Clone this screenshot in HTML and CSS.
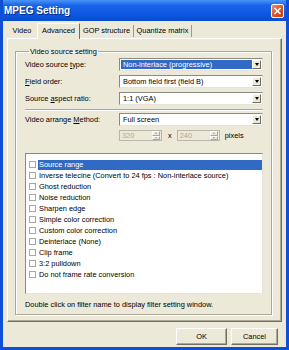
FILE: index.html
```html
<!DOCTYPE html>
<html lang="en">
<head>
    <meta charset="UTF-8">
    <title>MPEG Setting</title>
    <link rel="stylesheet" href="styles.css">
</head>
<body>
    <div class="window">
        <div class="titlebar">
            <span class="title">MPEG Setting</span>
            <span class="close">
                <svg width="13" height="14" viewBox="0 0 13 14"><path d="M3.5 4 L9.5 10 M9.5 4 L3.5 10" stroke="#fff" stroke-width="1.6"/></svg>
            </span>
        </div>
        <div class="content">
            <div class="tabs">
                <span class="tab tab-first">Video</span>
                <span class="tab active">Advanced</span>
                <span class="tab">GOP structure</span>
                <span class="tab">Quantize matrix</span>
            </div>
            <div class="panel">
                <fieldset class="group">
                    <legend>Video source setting</legend>
                    <div class="row">
                        <label>Video source <u>t</u>ype:</label>
                        <div class="combo"><span class="value selected">Non-interlace (progressive)</span><span class="drop"></span></div>
                    </div>
                    <div class="row">
                        <label><u>F</u>ield order:</label>
                        <div class="combo"><span class="value">Bottom field first (field B)</span><span class="drop"></span></div>
                    </div>
                    <div class="row">
                        <label>Source <u>a</u>spect ratio:</label>
                        <div class="combo"><span class="value">1:1 (VGA)</span><span class="drop"></span></div>
                    </div>
                    <div class="separator"></div>
                    <div class="row">
                        <label>Video arrange <u>M</u>ethod:</label>
                        <div class="combo"><span class="value">Full screen</span><span class="drop"></span></div>
                    </div>
                    <div class="row size-row">
                        <span></span>
                        <div class="size">
                            <div class="spin"><span class="value">320</span><span class="spin-btn"><i class="up"></i><i class="down"></i></span></div>
                            <span class="times">x</span>
                            <div class="spin"><span class="value">240</span><span class="spin-btn"><i class="up"></i><i class="down"></i></span></div>
                            <span class="unit">pixels</span>
                        </div>
                    </div>
                    <ul class="filters">
                        <li class="selected"><span class="check"></span><span class="name">Source range</span></li>
                        <li><span class="check"></span><span class="name">Inverse telecine (Convert to 24 fps : Non-interlace source)</span></li>
                        <li><span class="check"></span><span class="name">Ghost reduction</span></li>
                        <li><span class="check"></span><span class="name">Noise reduction</span></li>
                        <li><span class="check"></span><span class="name">Sharpen edge</span></li>
                        <li><span class="check"></span><span class="name">Simple color correction</span></li>
                        <li><span class="check"></span><span class="name">Custom color correction</span></li>
                        <li><span class="check"></span><span class="name">Deinterlace (None)</span></li>
                        <li><span class="check"></span><span class="name">Clip frame</span></li>
                        <li><span class="check"></span><span class="name">3:2 pulldown</span></li>
                        <li><span class="check"></span><span class="name">Do not frame rate conversion</span></li>
                    </ul>
                    <p class="hint">Double click on filter name to display filter setting window.</p>
                </fieldset>
            </div>
            <div class="buttons">
                <span class="button ok">OK</span>
                <span class="button cancel">Cancel</span>
            </div>
        </div>
    </div>
</body>
</html>
```

FILE: styles.css
```css
body {
    margin: 0;
    font-family: "Liberation Sans", Arial, sans-serif;
    font-size: 7.4px;
    color: #000;
    background: #ECE9D8;
}
.window {
    width: 289px;
    height: 350px;
    box-sizing: border-box;
    display: flex;
    flex-direction: column;
    background: #ECE9D8;
    border: 3px solid #0F4FD8;
    border-top: 0;
    overflow: hidden;
}
.titlebar {
    height: 21px;
    margin: 0 -3px;
    padding: 0 3px 0 4px;
    display: flex;
    align-items: center;
    justify-content: space-between;
    background: linear-gradient(#4A95FA, #1A64E8 25%, #0A56E0 75%, #0A4CC8);
    color: #fff;
}
.title {
    font-weight: bold;
    font-size: 10px;
    text-shadow: 1px 1px 0 #0A2A80;
}
.close {
    width: 13px;
    height: 14px;
    margin-right: 2px;
    border: 1px solid #fff;
    border-radius: 2px;
    background: linear-gradient(135deg, #F08A6A, #D8501E 60%, #C4400C);
    box-sizing: border-box;
    display: flex;
}
.close svg {
    margin: -1px;
}
.content {
    flex: 1;
    display: flex;
    flex-direction: column;
    padding: 0 4px;
}
.tabs {
    height: 17px;
    display: flex;
    align-items: flex-end;
}
.tab {
    flex-shrink: 0;
    height: 12px;
    margin-bottom: 1px;
    line-height: 12px;
    padding: 0 2px;
    border-right: 1px solid #9D9A8C;
    box-sizing: border-box;
    white-space: nowrap;
    text-align: center;
}
.tab-first {
    width: 30px;
    border-right: 0;
}
.tab.active {
    height: 16px;
    line-height: 13px;
    width: 43px;
    border: 1px solid #fff;
    border-right: 1px solid #716F64;
    border-bottom: 0;
    margin-bottom: -1px;
    background: #ECE9D8;
    position: relative;
    z-index: 1;
}
.tab:nth-child(3) {
    width: 54px;
}
.tab:nth-child(4) {
    width: 58px;
}
.panel {
    height: 284px;
    box-sizing: border-box;
    border: 1px solid #fff;
    border-right-color: #716F64;
    border-bottom-color: #716F64;
    box-shadow: inset -1px -1px 0 #ACA899;
    padding: 8px 9px 0 7px;
}
.group {
    margin: 0;
    height: 268px;
    box-sizing: border-box;
    border: 1px solid #ACA899;
    box-shadow: inset 1px 1px 0 #fff, 1px 1px 0 #fff;
    padding: 2px 8px 0 9px;
}
.group legend {
    padding: 0 1px;
    margin-left: 4px;
    line-height: 9px;
}
.row {
    display: grid;
    grid-template-columns: 94px 1fr;
    align-items: center;
    margin-bottom: 4px;
}
.row label {
    white-space: nowrap;
}
.combo {
    height: 13px;
    box-sizing: border-box;
    border: 1px solid #8C8A80;
    border-right-color: #E6E4DA;
    border-bottom-color: #E6E4DA;
    background: #fff;
    display: flex;
    padding: 1px;
}
.combo .value {
    flex: 1;
    line-height: 9px;
    padding-left: 2px;
    white-space: nowrap;
}
.combo .value.selected {
    background: #316AC5;
    color: #fff;
}
.drop {
    width: 9px;
    box-sizing: border-box;
    border: 1px solid #fff;
    border-right-color: #716F64;
    border-bottom-color: #716F64;
    background: #ECE9D8;
    display: flex;
    align-items: center;
    justify-content: center;
}
.drop::after {
    content: "";
    border: 2px solid transparent;
    border-top: 3px solid #000;
    margin-top: 2px;
}
.separator {
    height: 0;
    border-top: 1px solid #ACA899;
    border-bottom: 1px solid #fff;
    margin: 3px 0 2px;
}
.size-row {
    margin-bottom: 0;
}
.size {
    display: flex;
    align-items: center;
}
.spin {
    width: 43px;
    height: 11px;
    box-sizing: border-box;
    border: 1px solid #B8B6AA;
    background: #ECE9D8;
    display: flex;
    padding: 0 1px;
}
.spin .value {
    flex: 1;
    color: #ACA899;
    line-height: 9px;
    padding-left: 1px;
}
.spin-btn {
    width: 8px;
    display: flex;
    flex-direction: column;
}
.spin-btn i {
    flex: 1;
    border: 1px solid #fff;
    border-right-color: #ACA899;
    border-bottom-color: #ACA899;
    display: flex;
    align-items: center;
    justify-content: center;
}
.spin-btn .up::after {
    content: "";
    border: 1px solid transparent;
    border-bottom: 2px solid #ACA899;
    border-top: 0;
}
.spin-btn .down::after {
    content: "";
    border: 1px solid transparent;
    border-top: 2px solid #ACA899;
    border-bottom: 0;
}
.times {
    margin: 0 5px 0 6px;
}
.unit {
    margin-left: 5px;
}
.filters {
    list-style: none;
    margin: 12px 0 0;
    padding: 5px 0 0 3px;
    height: 141px;
    box-sizing: border-box;
    background: #fff;
    border: 1px solid #8C8A80;
    border-right-color: #E6E4DA;
    border-bottom-color: #E6E4DA;
}
.filters li {
    height: 11px;
    display: flex;
    align-items: center;
}
.check {
    width: 7px;
    height: 7px;
    box-sizing: border-box;
    border: 1px solid #A8A8A0;
    background: #fff;
    margin-right: 2px;
}
.name {
    flex: 1;
    height: 10px;
    line-height: 10px;
    padding-left: 1px;
    white-space: nowrap;
}
.filters li.selected .name {
    background: #316AC5;
    color: #fff;
}
.hint {
    margin: 6px 0 0;
}
.buttons {
    display: flex;
    justify-content: flex-end;
    gap: 4px;
    margin-top: 6px;
    padding-right: 4px;
}
.button {
    height: 17px;
    box-sizing: border-box;
    border: 1px solid #fff;
    border-right-color: #716F64;
    border-bottom-color: #716F64;
    box-shadow: inset -1px -1px 0 #ACA899;
    text-align: center;
    line-height: 15px;
}
.ok {
    width: 51px;
}
.cancel {
    width: 47px;
}
```
